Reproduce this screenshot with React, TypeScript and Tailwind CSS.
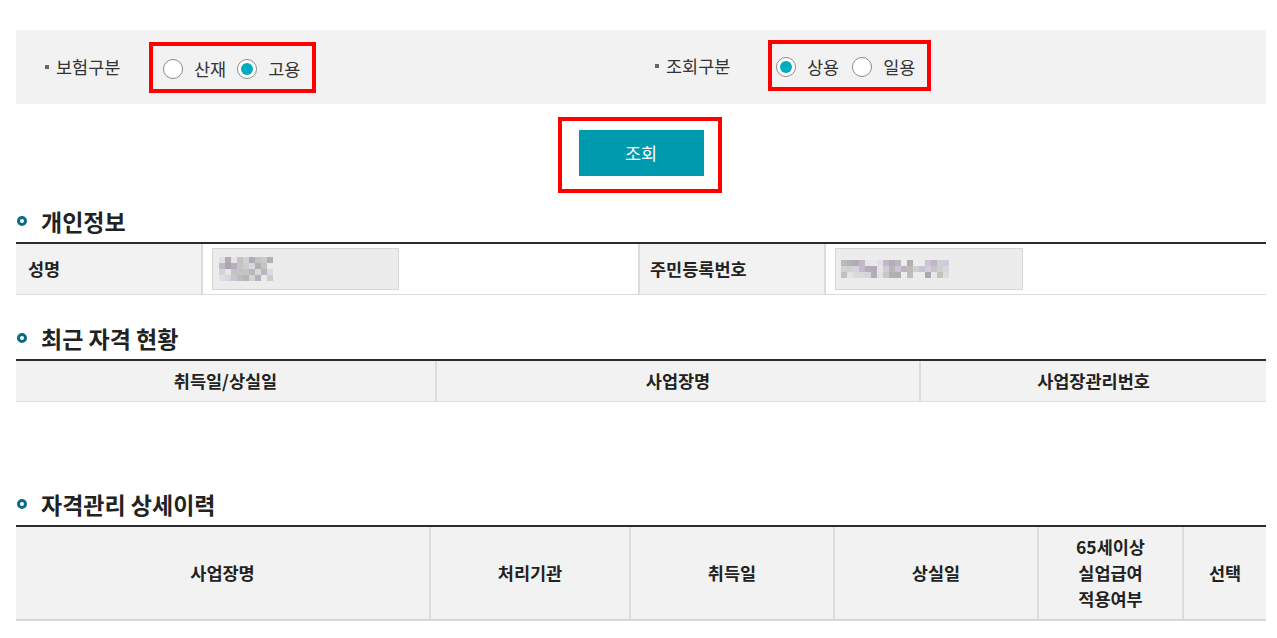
import React from 'react';

const FONT = { fontFamily: '"Noto Sans CJK KR", "Noto Sans", sans-serif' };

const Radio: React.FC<{ checked?: boolean; label: string }> = ({ checked, label }) => (
  <label className="flex items-center gap-[11px]">
    <span className="flex h-[20px] w-[20px] items-center justify-center rounded-full border border-[#8a8a8a] bg-white">
      {checked && <span className="h-[12px] w-[12px] rounded-full bg-[#00acc1]" />}
    </span>
    <span className="text-[17.5px] leading-[24px] text-[#333]">{label}</span>
  </label>
);

const FilterLabel: React.FC<{ text: string }> = ({ text }) => (
  <div className="flex items-center gap-[7px]">
    <span className="h-[4px] w-[4px] bg-[#666]" />
    <span className="text-[17.5px] leading-[24px] text-[#333]">{text}</span>
  </div>
);

const SectionTitle: React.FC<{ title: string; className?: string }> = ({ title, className }) => (
  <div className={`flex h-[28px] items-center gap-[14px] pl-[1px] mb-[7px] ${className ?? ''}`}>
    <span className="h-[10px] w-[10px] rounded-full border-[3px] border-[#0b6b87]" />
    <h2 className="text-[23px] font-bold leading-[28px] text-[#222]">{title}</h2>
  </div>
);

// pixelated blur over private data
const Mosaic: React.FC<{ cols: number; rows: number; seed: number; gaps?: number[] }> = ({ cols, rows, seed, gaps = [] }) => {
  let s = seed;
  const rand = () => {
    s = (s * 9301 + 49297) % 233280;
    return s / 233280;
  };
  const cells: React.ReactNode[] = [];
  for (let r = 0; r < rows; r++) {
    for (let c = 0; c < cols; c++) {
      const v = rand();
      if (gaps.includes(c) && r !== 1) continue;
      const g = Math.round(170 + v * 65);
      const tint = rand() > 0.8 ? 8 : 0;
      cells.push(
        <rect key={`${r}-${c}`} x={c * 6} y={r * 6} width={6} height={6} fill={`rgb(${g},${g - tint},${g + tint})`} />
      );
    }
  }
  return (
    <svg width={cols * 6} height={rows * 6}>
      {cells}
    </svg>
  );
};

const Th: React.FC<{ w: string; children: React.ReactNode; last?: boolean }> = ({ w, children, last }) => (
  <div
    className={`${w} flex items-center justify-center text-center text-[17.5px] font-bold leading-[26px] text-[#222] ${
      last ? '' : 'border-r-2 border-[#dcdcdc]'
    }`}
  >
    {children}
  </div>
);

export default function App() {
  return (
    <div className="min-h-screen bg-white px-[16px] pt-[30px] pr-[11px]" style={FONT}>
      {/* filter bar */}
      <div className="flex h-[74px] items-center bg-[#f2f2f2] pl-[29px]">
        <div className="flex w-[610px] items-center">
          <div className="w-[104px]">
            <FilterLabel text="보험구분" />
          </div>
          <div className="flex h-[51px] items-center gap-[11px] border-4 border-[#ff0000] pl-[10px] pr-[12px] pt-[3px]">
            <Radio label="산재" />
            <Radio checked label="고용" />
          </div>
        </div>
        <div className="flex items-center pb-[3px]">
          <div className="w-[113px]">
            <FilterLabel text="조회구분" />
          </div>
          <div className="flex h-[51px] items-center gap-[13px] border-4 border-[#ff0000] pl-[4px] pr-[12px] pt-[3px]">
            <Radio checked label="상용" />
            <Radio label="일용" />
          </div>
        </div>
      </div>

      {/* search button */}
      <div className="mt-[13px] flex justify-center">
        <div className="mr-[3px] border-4 border-[#ff0000] pl-[17px] pr-[14px] pt-[9px] pb-[13px]">
          <button className="flex h-[46px] w-[125px] items-center justify-center bg-[#009aaf] text-[17.5px] text-white">
            조회
          </button>
        </div>
      </div>

      {/* personal info */}
      <SectionTitle title="개인정보" className="mt-[14px]" />
      <div className="flex h-[53px] border-t-2 border-b border-t-[#2b2b2b] border-b-[#dcdcdc]">
        <div className="flex w-[187px] items-center border-r-2 border-[#dcdcdc] bg-[#f2f2f2] pl-[12px] text-[17.5px] font-bold text-[#222]">
          성명
        </div>
        <div className="flex w-[435px] items-center pl-[9px]">
          <div className="flex h-[42px] w-[187px] items-center border border-[#d6d6d6] bg-[#ececec] pl-[6px]">
            <Mosaic cols={9} rows={4} seed={17} />
          </div>
        </div>
        <div className="flex w-[188px] items-center border-l-2 border-r-2 border-[#dcdcdc] bg-[#f2f2f2] pl-[10px] text-[17.5px] font-bold text-[#222]">
          주민등록번호
        </div>
        <div className="flex flex-1 items-center pl-[9px]">
          <div className="flex h-[42px] w-[188px] items-center border border-[#d6d6d6] bg-[#ececec] pl-[5px]">
            <Mosaic cols={18} rows={3} seed={51} gaps={[10, 12, 13]} />
          </div>
        </div>
      </div>

      {/* recent status */}
      <SectionTitle title="최근 자격 현황" className="mt-[29px]" />
      <div className="flex h-[43px] border-t-2 border-b border-t-[#2b2b2b] border-b-[#dcdcdc] bg-[#f2f2f2]">
        <Th w="w-[421px]">취득일/상실일</Th>
        <Th w="w-[484px]">사업장명</Th>
        <Th w="flex-1" last>
          사업장관리번호
        </Th>
      </div>

      {/* detail history */}
      <SectionTitle title="자격관리 상세이력" className="mt-[88px]" />
      <div className="flex h-[96px] border-t-2 border-b-2 border-t-[#2b2b2b] border-b-[#d6d6d6] bg-[#f2f2f2]">
        <Th w="w-[415px]">사업장명</Th>
        <Th w="w-[200px]">처리기관</Th>
        <Th w="w-[204px]">취득일</Th>
        <Th w="w-[204px]">상실일</Th>
        <Th w="w-[145px]">
          65세이상
          <br />
          실업급여
          <br />
          적용여부
        </Th>
        <Th w="flex-1" last>
          선택
        </Th>
      </div>
    </div>
  );
}
